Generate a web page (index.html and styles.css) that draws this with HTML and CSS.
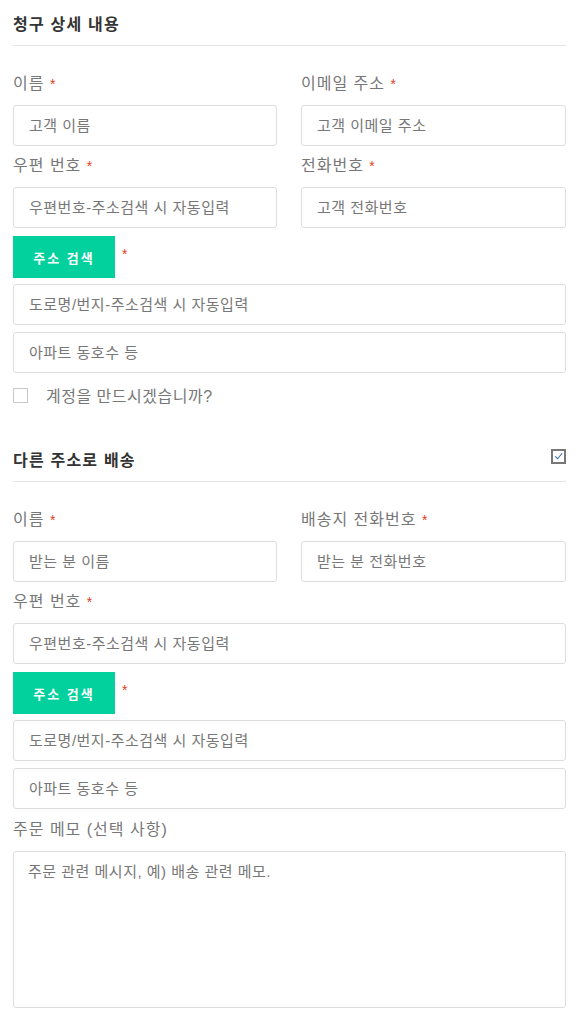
FILE: index.html
```html
<!DOCTYPE html>
<html lang="ko">
<head>
<meta charset="utf-8">
<link rel="stylesheet" href="styles.css">
</head>
<body>
<div class="page">
  <section class="billing">
    <h3 class="section-title">청구 상세 내용</h3>
    <div class="grid">
      <div class="field">
        <label class="label">이름 <span class="req">*</span></label>
        <input class="input" placeholder="고객 이름">
      </div>
      <div class="field">
        <label class="label">이메일 주소 <span class="req">*</span></label>
        <input class="input" placeholder="고객 이메일 주소">
      </div>
      <div class="field">
        <label class="label">우편 번호 <span class="req">*</span></label>
        <input class="input" placeholder="우편번호-주소검색 시 자동입력">
      </div>
      <div class="field">
        <label class="label">전화번호 <span class="req">*</span></label>
        <input class="input" placeholder="고객 전화번호">
      </div>
    </div>
    <div class="search-row">
      <button class="btn">주소 검색</button><span class="req btn-req">*</span>
    </div>
    <input class="input full" placeholder="도로명/번지-주소검색 시 자동입력">
    <input class="input full" placeholder="아파트 동호수 등">
    <div class="check-row">
      <span class="box"></span>
      <span class="check-label">계정을 만드시겠습니까?</span>
    </div>
  </section>

  <section class="shipping">
    <div class="title-row">
      <h3 class="section-title">다른 주소로 배송</h3>
      <span class="box checked">
        <svg viewBox="0 0 12 12" width="12" height="12"><path d="M2.5 6.5 L5 9 L10 3" fill="none" stroke="#3b6fb5" stroke-width="1.2"/></svg>
      </span>
    </div>
    <div class="grid">
      <div class="field">
        <label class="label">이름 <span class="req">*</span></label>
        <input class="input" placeholder="받는 분 이름">
      </div>
      <div class="field">
        <label class="label">배송지 전화번호 <span class="req">*</span></label>
        <input class="input" placeholder="받는 분 전화번호">
      </div>
    </div>
    <div class="field">
      <label class="label">우편 번호 <span class="req">*</span></label>
      <input class="input" placeholder="우편번호-주소검색 시 자동입력">
    </div>
    <div class="search-row">
      <button class="btn">주소 검색</button><span class="req btn-req">*</span>
    </div>
    <input class="input full" placeholder="도로명/번지-주소검색 시 자동입력">
    <input class="input full" placeholder="아파트 동호수 등">
    <div class="field memo">
      <label class="label">주문 메모 (선택 사항)</label>
      <textarea class="textarea" placeholder="주문 관련 메시지, 예) 배송 관련 메모."></textarea>
    </div>
  </section>
</div>
</body>
</html>
```

FILE: styles.css
```css
* { box-sizing: border-box; }
html, body { margin: 0; padding: 0; background: #fff; }
body {
  font-family: "Liberation Sans", "Noto Sans CJK KR", sans-serif;
  color: #777;
}
.page { padding: 0 14px 0 13px; }

.section-title {
  margin: 0;
  font-size: 16px;
  font-weight: 700;
  color: #333;
  letter-spacing: 1.2px;
  line-height: 24px;
}
.billing .section-title {
  padding-top: 13px;
  padding-bottom: 8px;
  border-bottom: 1px solid #e5e5e5;
}
.billing .grid { margin-top: 26px; }

.title-row {
  display: flex;
  justify-content: space-between;
  align-items: center;
  padding-bottom: 8px;
  border-bottom: 1px solid #e5e5e5;
  margin-top: 39px;
}
.shipping .grid { margin-top: 26px; }

.grid {
  display: grid;
  grid-template-columns: 264px 265px;
  column-gap: 24px;
}
.field { display: flex; flex-direction: column; margin-bottom: 8px; }
.label {
  font-size: 16px;
  line-height: 24px;
  color: #777;
  letter-spacing: 1px;
  margin-bottom: 9px;
}
.req { color: #e2401c; font-size: 14px; letter-spacing: 0; }

.input {
  display: block;
  width: 100%;
  height: 41px;
  border: 1px solid #ddd;
  border-radius: 3px;
  padding: 0 15px;
  font-family: "Liberation Sans", "Noto Sans CJK KR", sans-serif;
  font-size: 15px;
  letter-spacing: 0.5px;
  color: #777;
  background: #fff;
  outline: none;
}
.input::placeholder, .textarea::placeholder { color: #777; opacity: 1; }
.input.full { margin-bottom: 7px; }

.search-row {
  display: flex;
  align-items: flex-start;
  margin-bottom: 6px;
}
.btn {
  width: 102px;
  height: 42px;
  border: none;
  background: #02d09d;
  color: #fff;
  font-family: "Liberation Sans", "Noto Sans CJK KR", sans-serif;
  font-size: 13px;
  font-weight: 700;
  letter-spacing: 2px;
  padding: 0;
}
.btn-req { margin-left: 7px; margin-top: 10px; }

.check-row {
  display: flex;
  align-items: center;
  height: 30px;
}
.box {
  width: 15px;
  height: 15px;
  border: 1px solid #c8c8c8;
  background: #fff;
  display: inline-flex;
  align-items: center;
  justify-content: center;
}
.box.checked { border: 2px solid #777; margin-top: -10px; }
.check-label { margin-left: 18px; font-size: 16px; letter-spacing: 0.5px; color: #777; }

.memo { padding-top: 2px; }
.textarea {
  width: 100%;
  height: 157px;
  border: 1px solid #ddd;
  border-radius: 3px;
  padding: 9px 14px;
  font-family: "Liberation Sans", "Noto Sans CJK KR", sans-serif;
  font-size: 15px;
  letter-spacing: 0.5px;
  line-height: 22px;
  resize: none;
  outline: none;
  color: #777;
}
```
